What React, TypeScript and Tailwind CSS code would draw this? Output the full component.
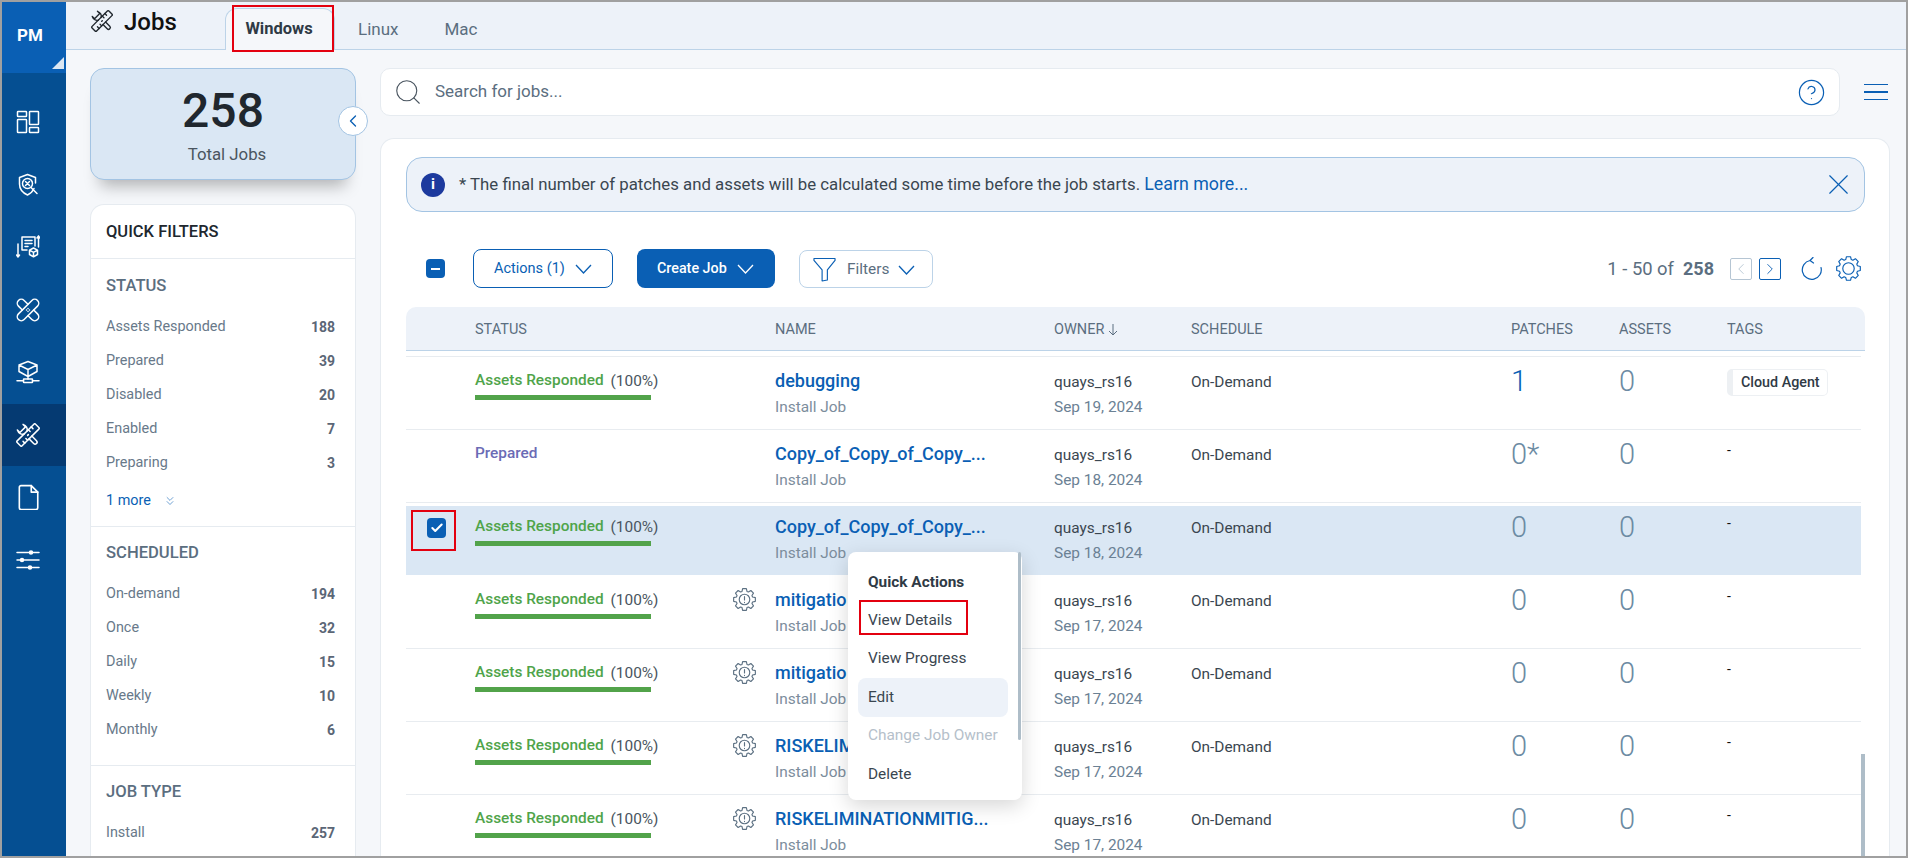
import { ChevronLeft, ChevronRight, ChevronsDown, CircleHelp, Search, X, Check } from "lucide-react";

// ── Data ─────────────────────────────────────────────────────

const FILTERS = [
  {
    title: "STATUS",
    items: [
      ["Assets Responded", "188"],
      ["Prepared", "39"],
      ["Disabled", "20"],
      ["Enabled", "7"],
      ["Preparing", "3"],
    ],
    more: true,
  },
  {
    title: "SCHEDULED",
    items: [
      ["On-demand", "194"],
      ["Once", "32"],
      ["Daily", "15"],
      ["Weekly", "10"],
      ["Monthly", "6"],
    ],
  },
  { title: "JOB TYPE", items: [["Install", "257"]] },
];

const JOBS = [
  { status: "Assets Responded", name: "debugging", date: "Sep 19, 2024", patches: "1", tag: "Cloud Agent" },
  { status: "Prepared", name: "Copy_of_Copy_of_Copy_...", date: "Sep 18, 2024", patches: "0*" },
  { status: "Assets Responded", name: "Copy_of_Copy_of_Copy_...", date: "Sep 18, 2024", patches: "0", selected: true },
  { status: "Assets Responded", name: "mitigatio", date: "Sep 17, 2024", patches: "0", gear: true, afterSelected: true },
  { status: "Assets Responded", name: "mitigatio", date: "Sep 17, 2024", patches: "0", gear: true },
  { status: "Assets Responded", name: "RISKELIM", date: "Sep 17, 2024", patches: "0", gear: true },
  { status: "Assets Responded", name: "RISKELIMINATIONMITIG...", date: "Sep 17, 2024", patches: "0", gear: true },
];

const COLUMNS = "grid grid-cols-[69px_300px_279px_137px_320px_108px_108px_1fr]";

// ── Icons ────────────────────────────────────────────────────

// 8-tooth cog outline, centred on 12,12
function cogPath(outer: number, root: number) {
  const pts: string[] = [];
  for (let i = 0; i < 8; i++) {
    const a = (i * Math.PI) / 4;
    [[root, -0.3], [outer, -0.17], [outer, 0.17], [root, 0.3]].forEach(([r, d]) => {
      pts.push(`${(12 + r * Math.sin(a + d)).toFixed(2)} ${(12 - r * Math.cos(a + d)).toFixed(2)}`);
    });
  }
  return `M${pts.join("L")}Z`;
}

function NavIcon({ children, className = "w-6 h-6" }: { children: React.ReactNode; className?: string }) {
  return (
    <svg viewBox="0 0 24 24" fill="none" stroke="currentColor" strokeWidth={1.5} strokeLinejoin="round" strokeLinecap="round" className={className}>
      {children}
    </svg>
  );
}

function ToolsPaths() {
  return (
    <>
      <g transform="rotate(45 12 12)">
        <rect x="8.5" y="-1" width="7" height="26" rx="1.2" />
        <path d="M8.5 4h2.5M8.5 8h2.5M13 16h2.5M13 20h2.5" />
        <path d="M12 11.5v1" />
      </g>
      <g transform="rotate(-45 12 12)">
        <path d="M10 8.5C7.5 7.5 6.5 4 8 1v3.5h8V1c1.5 3 .5 6.5-2 7.5" />
        <path d="M10 15.5V22a2 2 0 0 0 4 0v-6.5" />
      </g>
    </>
  );
}

function DashboardIcon() {
  return (
    <NavIcon>
      <rect x="1.5" y="1.5" width="9" height="5" rx=".6" />
      <rect x="1.5" y="9.5" width="9" height="13" rx=".6" />
      <rect x="13.5" y="1.5" width="9" height="13" rx=".6" />
      <rect x="13.5" y="17.5" width="9" height="5" rx=".6" />
    </NavIcon>
  );
}

function ShieldIcon() {
  return (
    <NavIcon>
      <path d="M18 15.5c-1.3 3-3.5 5-6.5 6.500C7 20 3.500 16.500 3.500 11V4.500L11.500 1.500l8 3V10" />
      <circle cx="11.5" cy="10.500" r="5" />
      <path d="M9.500 8.500l4 4M13.500 8.500l-4 4M15 14.500l6 6" />
    </NavIcon>
  );
}

function ListBoxIcon() {
  return (
    <NavIcon>
      <path d="M6 15V2h13v9M6 15h5" />
      <path d="M9 5.500h7M9 8.500h7M9 11.500h3" />
      <path d="M2 9v13M.5 20 2 22l1.500-2M22.500 12V1M21 3l1.500-2L24 3" />
      <path d="M17.500 13l4 2.200v4.300l-4 2.300-4-2.300v-4.300zM13.500 15.200l4 2.200 4-2.200M17.500 17.400v4.400" />
    </NavIcon>
  );
}

function BandagePaths() {
  return (
    <>
      <g transform="rotate(45 12 12)">
        <rect x="8" y="-1.5" width="8" height="27" rx="4" />
      </g>
      <g transform="rotate(-45 12 12)">
        <path d="M8 8V2.500a4 4 0 0 1 8 0V8M8 16v5.500a4 4 0 0 0 8 0V16" />
      </g>
      <path d="M12 10.500v.1M12 13.400v.1M10.500 12h.1M13.400 12h.1" />
    </>
  );
}

function CubeNetworkIcon() {
  return (
    <NavIcon>
      <path d="M12 1.500 21 5v6.500l-9 5-9-5V5zM3 5l9 4.500L21 5M12 9.500v7M12 16.500V19" />
      <rect x="7.5" y="19" width="9" height="3.5" rx=".5" />
      <path d="M1 20.700h6.500M16.500 20.700H23" />
    </NavIcon>
  );
}

function DocIcon() {
  return (
    <NavIcon className="w-[26px] h-[26px]">
      <path d="M4 3a1.500 1.500 0 0 1 1.500-1.500H15L21 7.500V22a1.500 1.500 0 0 1-1.500 1.500h-14A1.500 1.500 0 0 1 4 22z" />
      <path d="M15 1.500v6h6" />
    </NavIcon>
  );
}

function SlidersIcon() {
  return (
    <NavIcon>
      <path d="M1 4.500h22M1 12h22M1 19.500h22" />
      <circle cx="15" cy="4.5" r="1.5" fill="currentColor" />
      <circle cx="6" cy="12" r="1.5" fill="currentColor" />
      <circle cx="14" cy="19.5" r="1.5" fill="currentColor" />
    </NavIcon>
  );
}

function AlertGear() {
  return (
    <svg viewBox="0 0 24 24" fill="none" stroke="#5d7183" strokeWidth={1.2} strokeLinecap="round" strokeLinejoin="round" className="-mt-px w-[23px] h-[23px]">
      <path d={cogPath(11.5, 8.8)} />
      <circle cx="12" cy="12" r="5.5" />
      <path d="M12 9v3.500M12 15v.2" />
    </svg>
  );
}

function Chevron({ className = "" }: { className?: string }) {
  return (
    <svg viewBox="0 0 17 10" fill="none" stroke="currentColor" strokeWidth={1.3} className={`w-[17px] h-[10px] ${className}`}>
      <path d="M1 1l7.500 8L16 1" />
    </svg>
  );
}

// ── Sidebar ──────────────────────────────────────────────────

function Sidebar() {
  const icons = [
    <DashboardIcon key="d" />,
    <ShieldIcon key="s" />,
    <ListBoxIcon key="l" />,
    <NavIcon key="b"><BandagePaths /></NavIcon>,
    <CubeNetworkIcon key="c" />,
    <NavIcon key="t"><ToolsPaths /></NavIcon>,
    <DocIcon key="f" />,
    <SlidersIcon key="x" />,
  ];

  return (
    <aside className="w-16 shrink-0 bg-[#054f92] text-white flex flex-col">
      <div className="relative h-[71px] bg-[#0a5fb4] flex items-center justify-center pb-[4px] pr-2 text-[17px] font-bold">
        PM
        <svg viewBox="0 0 12 12" className="absolute right-[2px] bottom-[4px] w-3 h-3">
          <path d="M12 0v12H0z" fill="#dbe7f3" />
        </svg>
      </div>
      <div className="flex flex-col pt-[18px]">
        {icons.map((icon, i) => (
          <div
            key={i}
            className={`h-[62.5px] pr-3 flex items-center justify-center ${i === 5 ? "bg-[#053a72]" : ""}`}
          >
            {icon}
          </div>
        ))}
      </div>
    </aside>
  );
}

// ── Top bar ──────────────────────────────────────────────────

function TopBar() {
  return (
    <header className="h-12 shrink-0 bg-[#edf2f9] border-b border-[#bcd3e8] flex">
      <div className="w-[159px] pl-[25px] pt-2 flex items-start gap-[11px]">
        <NavIcon className="w-[22px] h-[22px] text-[#20272e]"><ToolsPaths /></NavIcon>
        <span className="mt-px text-2xl leading-[22px] font-medium text-[#111]">Jobs</span>
      </div>
      <div className="relative mt-[6px] w-[110px] h-[42px] pr-[2px] bg-[#f5f7fa] border border-b-0 border-[#bcd3e8] rounded-t-xl flex items-center justify-center text-[16.5px] font-bold text-[#2f3a45]">
        Windows
        <div className="absolute -top-[4px] left-[6px] w-[102px] h-[47px] border-2 border-[#e3000f]" />
      </div>
      <span className="ml-[23px] mt-[17px] text-[17px] leading-5 text-[#5b6e80]">Linux</span>
      <span className="ml-[46px] mt-[17px] text-[17px] leading-5 text-[#5b6e80]">Mac</span>
    </header>
  );
}

// ── Quick filters ────────────────────────────────────────────

function QuickFilters() {
  return (
    <div className="mt-6 flex-1 min-h-0 overflow-hidden bg-white border border-b-0 border-[#e6ebf0] rounded-t-[14px]">
      <div className="h-[54px] pt-[2px] flex items-center pl-[15px] text-[16.5px] font-medium text-[#20272e] border-b border-[#e6ebf0]">
        QUICK FILTERS
      </div>
      {FILTERS.map((group) => (
        <section key={group.title} className={`px-[15px] ${group.more ? "pt-[17px] pb-[15px]" : "pt-4 pb-[18px]"} border-b border-[#e6ebf0]`}>
          <h3 className="text-[16.6px] leading-5 font-medium text-[#5b6e80]">{group.title}</h3>
          <div className="mt-[14px]">
            {group.items.map(([label, count]) => (
              <div key={label} className="h-[34px] pr-[5px] flex items-center justify-between text-[14.4px] text-[#68798a]">
                <span>{label}</span>
                <span className="text-sm font-bold text-[#5b6676]">{count}</span>
              </div>
            ))}
          </div>
          {group.more && (
            <div className="mt-[11px] h-5 flex items-center gap-3 text-[14.4px] text-[#0a5fb4]">
              1 more
              <ChevronsDown size={14} strokeWidth={1} />
            </div>
          )}
        </section>
      ))}
    </div>
  );
}

// ── Jobs table ───────────────────────────────────────────────

function JobRow({ job }: { job: (typeof JOBS)[number] }) {
  const rowClass = job.selected
    ? "border-[#e8ecf0] pt-[3px] bg-[#dae7f4] bg-clip-content"
    : job.afterSelected
      ? "border-transparent"
      : "border-[#e8ecf0]";

  return (
    <div className={`h-[73px] shrink-0 border-t ${rowClass}`}>
      <div className={`${COLUMNS} ${job.selected ? "-mt-[3px]" : ""}`}>
        <div className="relative">
          {job.selected && (
            <>
              <div className="mt-[15px] ml-[21px] w-[19px] h-5 rounded-[4px] bg-[#0a5fb4] flex items-center justify-center text-white">
                <Check size={14} strokeWidth={3.5} />
              </div>
              <div className="absolute left-[5px] top-[7px] w-[45px] h-[41px] border-2 border-[#e3000f]" />
            </>
          )}
        </div>
        <div className="pt-[13px] pr-[19px] flex justify-between items-start">
          <div>
            <div className="text-[15.4px] leading-5 flex gap-[7px] whitespace-nowrap">
              <span className={`font-medium ${job.status === "Prepared" ? "text-[#6b6bb5]" : "text-[#4fa44a]"}`}>{job.status}</span>
              {job.status !== "Prepared" && <span className="mt-px text-[#4a5560]">(100%)</span>}
            </div>
            {job.status !== "Prepared" && <div className="mt-1 w-[176px] h-[5px] bg-[#52a34a]" />}
          </div>
          {job.gear && <AlertGear />}
        </div>
        <div className="pt-[13px]">
          <div className="text-lg leading-[22px] font-medium text-[#0a5fb4] whitespace-nowrap">{job.name}</div>
          <div className="mt-[5px] text-[15.4px] leading-5 text-[#7c8d9c]">Install Job</div>
        </div>
        <div className="pt-[15px]">
          <div className="text-[15.4px] leading-5 text-[#3a4650]">quays_rs16</div>
          <div className="mt-[5px] text-[15.4px] leading-5 text-[#6b8194]">{job.date}</div>
        </div>
        <div className="pt-[15px] text-[15.4px] leading-5 text-[#3a4650]">On-Demand</div>
        <div className={`pt-[10px] text-[29px] leading-[28px] font-light ${job.patches === "1" ? "text-[#0a5fb4]" : "text-[#6c8ba3]"}`}>
          {job.patches}
        </div>
        <div className="pt-[10px] text-[29px] leading-[28px] font-light text-[#6c8ba3]">0</div>
        <div className={job.tag ? "pt-3" : "pt-[8px]"}>
          {job.tag ? (
            <div className="inline-flex items-center h-[27px] w-[101px] border border-l-[6px] border-[#edf0f3] rounded-[5px] pl-[8px] text-[14.3px] font-medium text-[#2f3a45]">
              {job.tag}
            </div>
          ) : (
            <span className="text-sm leading-5 text-[#111]">-</span>
          )}
        </div>
      </div>
    </div>
  );
}

function QuickActions() {
  const items = ["View Details", "View Progress", "Edit", "Change Job Owner", "Delete"];
  return (
    <div className="absolute left-[442px] top-[201px] w-[174px] h-[248px] bg-white rounded-lg shadow-[0_6px_20px_rgba(0,0,0,0.16)] pt-5">
      <div className="absolute right-[1px] top-0 w-[3px] h-[188px] bg-[#aebdc8] rounded-sm" />
      <div className="pl-5 text-[15.4px] leading-5 font-bold text-[#2f3a45]">Quick Actions</div>
      <div className="mt-[9px] relative">
        {items.map((item) => (
          <div
            key={item}
            className={`mx-[10px] w-[150px] h-[38.5px] px-[10px] flex items-center text-[15.4px] whitespace-nowrap rounded-lg ${
              item === "Edit" ? "bg-[#edf2f9] text-[#3a4650]" : item === "Change Job Owner" ? "text-[#b5c0ca]" : "text-[#3a4650]"
            }`}
          >
            {item}
          </div>
        ))}
        <div className="absolute left-[11px] -top-px w-[109px] h-[35px] border-2 border-[#e3000f]" />
      </div>
    </div>
  );
}

function JobsPanel() {
  return (
    <div className="mt-[22px] flex-1 min-h-0 flex flex-col bg-white border border-b-0 border-[#e6ebf0] rounded-t-[14px] pl-[25px] pr-6 pt-[18px]">
      <div className="h-[55px] shrink-0 bg-[#edf2f9] border border-[#a3c4e3] rounded-2xl flex items-center pl-[14px] pr-2">
        <div className="w-6 h-6 rounded-full bg-[#1d3a9e] text-white text-[15px] font-bold flex items-center justify-center">i</div>
        <p className="ml-[14px] text-[16.8px] text-[#3a4650]">
          * The final number of patches and assets will be calculated some time before the job starts.{" "}
          <span className="text-[17.8px] text-[#0a5fb4]">Learn more...</span>
        </p>
        <X size={35} strokeWidth={0.8} className="ml-auto text-[#0a5fb4]" />
      </div>

      {/* Toolbar */}
      <div className="mt-[37px] h-[39px] shrink-0 flex items-center pl-5">
        <div className="w-[19px] h-[19px] rounded-[4px] bg-[#0a5fb4] flex items-center justify-center">
          <div className="w-[9px] h-[2px] bg-white" />
        </div>
        <button className="ml-7 w-[140px] h-[39px] pt-px border border-[#0a5fb4] rounded-lg flex items-center pl-5 gap-[10px] text-[14.5px] text-[#0a5fb4]">
          Actions (1)
          <Chevron />
        </button>
        <button className="ml-6 w-[138px] h-[39px] pt-px bg-[#0a5fb4] rounded-lg flex items-center pl-5 gap-[10px] text-[14.3px] font-medium text-white">
          Create Job
          <Chevron />
        </button>
        <button className="ml-6 w-[134px] h-[38px] mt-px pt-px border border-[#bcd3e8] rounded-lg flex items-center pl-[13px] text-[15.4px] text-[#5b6e80]">
          <svg viewBox="0 0 24 26" fill="none" stroke="#0a5fb4" strokeWidth={1.2} strokeLinejoin="round" className="w-[23px] h-[25px] mr-[11px]">
            <path d="M1 1.500h22v2L15 13.500V24l-5.500 1V13.500L1 3.500z" />
          </svg>
          Filters
          <Chevron className="ml-[9px] text-[#0a5fb4]" />
        </button>
        <div className="ml-auto flex items-center pr-[4px]">
          <span className="text-[18.4px] text-[#5b6e80]">1 - 50 of</span>
          <span className="ml-[9px] text-lg font-bold text-[#5b6e80]">258</span>
          <div className="ml-4 w-[22px] h-[22px] border border-[#b5c5d3] rounded-[2px] flex items-center justify-center text-[#b5c5d3]">
            <ChevronLeft size={18} strokeWidth={1.2} />
          </div>
          <div className="ml-[7px] w-[22px] h-[22px] border border-[#0a5fb4] rounded-[2px] flex items-center justify-center text-[#0a5fb4]">
            <ChevronRight size={18} strokeWidth={1.2} />
          </div>
          <svg viewBox="0 0 24 24" fill="none" stroke="#0a5fb4" strokeWidth={1.2} strokeLinecap="round" className="ml-[19px] w-6 h-6">
            <path d="M10 3.500a9.500 9.500 0 1 0 11 7M10 3.500l3-3M10 3.500l3.500 2.500" />
          </svg>
          <svg viewBox="0 0 24 24" fill="none" stroke="#0a5fb4" strokeWidth={1.1} strokeLinejoin="round" className="ml-[12px] w-[25px] h-[25px]">
            <path d={cogPath(11.5, 9)} />
            <circle cx="12" cy="12" r="5.5" />
          </svg>
        </div>
      </div>

      {/* Table */}
      <div className="mt-[19px] h-11 shrink-0 pt-[3px] bg-[#edf2f9] border-b border-[#bcd3e8] rounded-t-[10px] text-[14.5px] text-[#5b6e80]">
        <div className={`${COLUMNS} h-full items-center`}>
          <div />
          <div>STATUS</div>
          <div>NAME</div>
          <div className="flex items-center gap-1">
            OWNER
            <svg viewBox="0 0 10 12" fill="none" stroke="currentColor" strokeWidth={1} className="w-[10px] h-3">
              <path d="M5 0v11M1 7l4 4 4-4" />
            </svg>
          </div>
          <div>SCHEDULE</div>
          <div>PATCHES</div>
          <div>ASSETS</div>
          <div>TAGS</div>
        </div>
      </div>
      <div className="relative flex-1 min-h-0 flex">
        <div className="flex-1 min-w-0 pt-[5px] flex flex-col overflow-hidden">
          {JOBS.map((job, i) => (
            <JobRow key={i} job={job} />
          ))}
        </div>
        <div className="w-[4px] flex flex-col justify-end">
          <div className="h-[102px] bg-[#aebdc8]" />
        </div>
        <QuickActions />
      </div>
    </div>
  );
}

// ── Page ─────────────────────────────────────────────────────

export default function App() {
  return (
    <div className="h-[858px] w-[1908px] overflow-hidden border-2 border-[#a0a0a0] flex bg-[#f5f7fa] font-[Roboto,sans-serif]">
      <Sidebar />
      <div className="flex-1 min-w-0 flex flex-col">
        <TopBar />
        <div className="flex-1 min-h-0 flex pl-6 pr-4 pt-[18px] gap-6">
          {/* Left column */}
          <div className="w-[266px] shrink-0 flex flex-col">
            <div className="relative h-28 shrink-0 bg-[#dae7f4] border border-[#a3c4e3] rounded-[14px] shadow-[0_16px_16px_-10px_rgba(0,0,0,0.28)] flex flex-col items-center">
              <div className="mt-[14px] text-5xl leading-[56px] font-medium text-[#20272e]">258</div>
              <div className="mt-[3px] ml-2 text-[16.8px] text-[#4a5560]">Total Jobs</div>
              <div className="absolute -right-[13px] top-[37px] w-[30px] h-[30px] rounded-full bg-white border border-[#a3c4e3] flex items-center justify-center text-[#0a5fb4]">
                <ChevronLeft size={20} strokeWidth={1.6} />
              </div>
            </div>
            <QuickFilters />
          </div>

          {/* Right column */}
          <div className="flex-1 min-w-0 flex flex-col">
            <div className="h-12 shrink-0 flex items-center">
              <div className="w-[1460px] h-12 bg-white border border-[#e6ebf0] rounded-[10px] flex items-center pl-3 pr-[13px]">
                <Search size={30} strokeWidth={0.9} className="text-[#4a5560]" />
                <span className="ml-3 text-[17px] text-[#5b6e80]">Search for jobs...</span>
                <CircleHelp size={29} strokeWidth={1} className="ml-auto text-[#0a5fb4]" />
              </div>
              <div className="ml-6 w-6 flex flex-col gap-[6px]">
                <div className="h-[1.5px] bg-[#0a5fb4]" />
                <div className="h-[1.5px] bg-[#0a5fb4]" />
                <div className="h-[1.5px] bg-[#0a5fb4]" />
              </div>
            </div>
            <JobsPanel />
          </div>
        </div>
      </div>
    </div>
  );
}
